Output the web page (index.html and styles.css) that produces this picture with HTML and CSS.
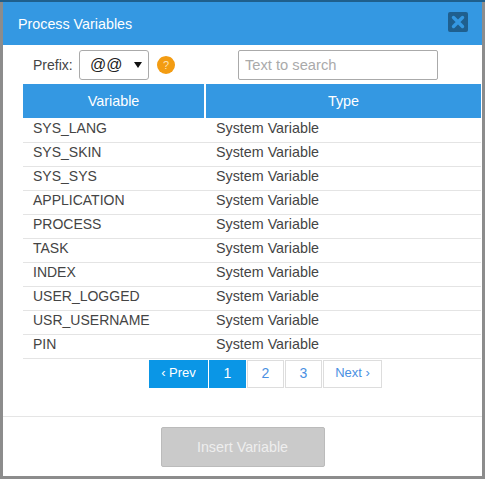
FILE: index.html
```html
<!DOCTYPE html>
<html lang="en">

<head>
    <meta charset="UTF-8">
    <meta name="viewport" content="width=device-width, initial-scale=1.0">
    <title>Process Variables</title>
    <link rel="stylesheet" href="styles.css">
</head>

<body>
    <div class="modal">
        <div class="modal-header">
            <span class="modal-title">Process Variables</span>
            <button class="close-btn" aria-label="Close">
                <svg width="14" height="14" viewBox="0 0 14 14">
                    <path d="M2.5 2.5L11.5 11.5M11.5 2.5L2.5 11.5" stroke="#3498e2" stroke-width="3.4" stroke-linecap="round" fill="none" />
                </svg>
            </button>
        </div>

        <div class="modal-body">
            <div class="filters">
                <label class="prefix-label">Prefix:</label>
                <div class="prefix-select">
                    <span>@@</span>
                    <span class="arrow"></span>
                </div>
                <span class="help-badge">?</span>
                <input class="search-input" type="text" placeholder="Text to search">
            </div>

            <table class="var-table">
                <thead>
                    <tr>
                        <th class="col-name">Variable</th>
                        <th>Type</th>
                    </tr>
                </thead>
                <tbody>
                    <tr><td>SYS_LANG</td><td class="col-type">System Variable</td></tr>
                    <tr><td>SYS_SKIN</td><td class="col-type">System Variable</td></tr>
                    <tr><td>SYS_SYS</td><td class="col-type">System Variable</td></tr>
                    <tr><td>APPLICATION</td><td class="col-type">System Variable</td></tr>
                    <tr><td>PROCESS</td><td class="col-type">System Variable</td></tr>
                    <tr><td>TASK</td><td class="col-type">System Variable</td></tr>
                    <tr><td>INDEX</td><td class="col-type">System Variable</td></tr>
                    <tr><td>USER_LOGGED</td><td class="col-type">System Variable</td></tr>
                    <tr><td>USR_USERNAME</td><td class="col-type">System Variable</td></tr>
                    <tr><td>PIN</td><td class="col-type">System Variable</td></tr>
                </tbody>
            </table>

            <div class="pager">
                <a class="page page-wide active">&lsaquo; Prev</a>
                <a class="page active page-num">1</a>
                <a class="page page-num">2</a>
                <a class="page page-num">3</a>
                <a class="page page-wide">Next &rsaquo;</a>
            </div>
        </div>

        <div class="modal-footer">
            <button class="insert-btn" disabled>Insert Variable</button>
        </div>
    </div>
</body>

</html>
```

FILE: styles.css
```css
html,
body {
    height: 479px;
    overflow: hidden;
}

body {
    margin: 0;
    padding: 0 3px 3px 3px;
    box-sizing: border-box;
    background-color: #8c8c8c;
    border-top: 2px solid #1f5f8c;
    font-family: 'Liberation Sans', Arial, sans-serif;
    font-size: 14px;
    color: #444;
}

.modal {
    width: 479px;
    height: 474px;
    background-color: #fff;
    display: flex;
    flex-direction: column;
}

.modal-header {
    height: 43px;
    flex: none;
    background-color: #3498e2;
    display: flex;
    align-items: center;
    justify-content: space-between;
    padding: 0 4px 0 15px;
    box-sizing: border-box;
}

.modal-title {
    color: #fff;
    font-size: 14.3px;
}

.close-btn {
    width: 20px;
    height: 20px;
    margin: 0 10px 3px 0;
    padding: 0;
    border: none;
    border-radius: 2px;
    background-color: #1f5f8e;
    display: flex;
    align-items: center;
    justify-content: center;
}

.modal-body {
    flex: 1;
    padding: 5px 1px 0 20px;
}

.filters {
    display: flex;
    align-items: center;
    height: 30px;
    margin-bottom: 4px;
}

.prefix-label {
    margin-left: 10px;
    width: 46px;
}

.prefix-select {
    width: 70px;
    height: 30px;
    border: 1px solid #aaa;
    border-radius: 3px;
    box-sizing: border-box;
    display: flex;
    align-items: center;
    justify-content: space-between;
    padding: 0 6px 0 10px;
    font-size: 16px;
    color: #222;
}

.arrow {
    width: 0;
    height: 0;
    border-left: 4px solid transparent;
    border-right: 4px solid transparent;
    border-top: 6px solid #111;
}

.help-badge {
    width: 18px;
    height: 18px;
    margin-left: 8px;
    border-radius: 50%;
    background-color: #f39c12;
    color: #fde3b8;
    font-size: 11px;
    line-height: 18px;
    text-align: center;
}

.search-input {
    width: 200px;
    height: 30px;
    margin-left: 63px;
    padding: 0 6px;
    border: 1px solid #aaa;
    border-radius: 2px;
    box-sizing: border-box;
    font-family: inherit;
    font-size: 14.7px;
}

.search-input::placeholder {
    color: #aaa;
}

.var-table {
    width: 458px;
    border-collapse: collapse;
    table-layout: fixed;
}

.var-table th {
    height: 34px;
    padding: 0;
    background-color: #3498e2;
    color: #fff;
    font-weight: normal;
    font-size: 14.4px;
}

.var-table .col-name {
    width: 181px;
    border-right: 2px solid #fff;
}

.var-table td {
    height: 24px;
    padding: 0 10px 4px 10px;
    border-bottom: 1px solid #e4e4e4;
    box-sizing: border-box;
}

.var-table .col-type {
    padding-left: 11px;
    font-size: 14.3px;
}

.pager {
    display: flex;
    gap: 1px;
    margin-top: 1px;
    padding-left: 126px;
}

.page {
    width: 37px;
    height: 28px;
    border: 1px solid #ddd;
    box-sizing: border-box;
    color: #4a90e2;
    font-size: 13px;
    line-height: 24px;
    text-align: center;
}

.page-wide {
    width: 59px;
}

.page-num {
    font-size: 14px;
}

.page.active {
    background-color: #0a96e6;
    border-color: #0a96e6;
    color: #fff;
}

.modal-footer {
    flex: none;
    height: 60px;
    border-top: 1px solid #e5e5e5;
    display: flex;
    justify-content: center;
    padding-top: 10px;
    box-sizing: border-box;
}

.insert-btn {
    width: 164px;
    height: 40px;
    border: 1px solid #bbb;
    border-radius: 2px;
    background-color: #cacaca;
    color: #eee;
    font-family: inherit;
    font-size: 14.3px;
}
```
